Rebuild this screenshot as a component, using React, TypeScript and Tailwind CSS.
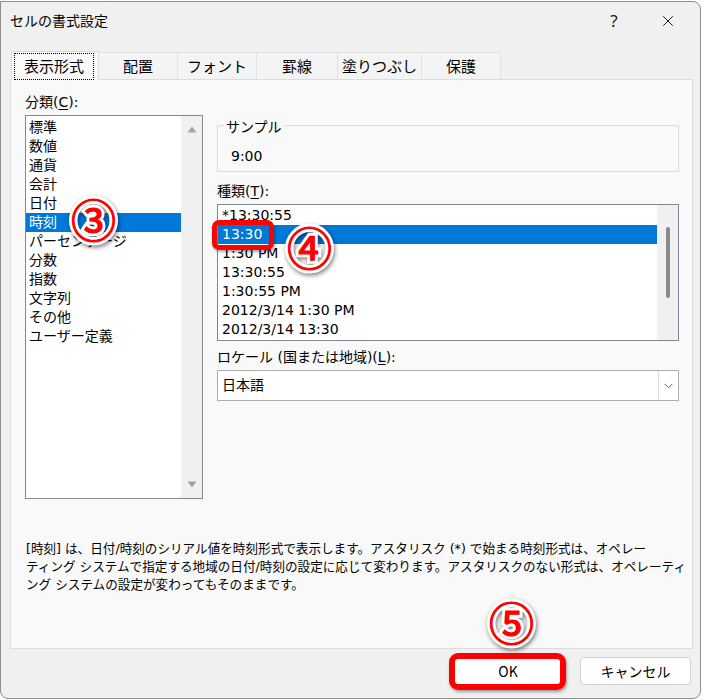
import { X } from "lucide-react";

const categories = [
  "標準",
  "数値",
  "通貨",
  "会計",
  "日付",
  "時刻",
  "パーセンテージ",
  "分数",
  "指数",
  "文字列",
  "その他",
  "ユーザー定義",
];

const types = [
  "*13:30:55",
  "13:30",
  "1:30 PM",
  "13:30:55",
  "1:30:55 PM",
  "2012/3/14 1:30 PM",
  "2012/3/14 13:30",
];

const tabs = [
  { label: "配置", w: "w-[80px]" },
  { label: "フォント", w: "w-[80px]" },
  { label: "罫線", w: "w-[82px]" },
  { label: "塗りつぶし", w: "w-[85px]" },
  { label: "保護", w: "w-[80px]" },
];

// red circled step number with white outline and soft shadow
const Step = ({ n, className }: { n: string; className: string }) => (
  <span
    className={`absolute pointer-events-none font-['Noto_Sans_CJK_JP',sans-serif] text-[45px] leading-none ${className}`}
  >
    <span className="relative text-[#ff0000] [-webkit-text-stroke:7px_#ffffff] [paint-order:stroke_fill] drop-shadow-[1px_2px_2px_rgba(0,0,0,0.5)]">
      {n}
    </span>
    <span className="absolute left-0 top-0 text-[#ff0000] [-webkit-text-stroke:1.2px_#ff0000]">{n}</span>
  </span>
);

const App = () => {
  return (
    <div className="relative w-[703px] h-[700px] bg-white overflow-hidden pt-[1px] font-['DejaVu_Sans','Noto_Sans_CJK_JP',sans-serif] text-black">
      <div className="w-[701px] h-[698px] flex flex-col bg-[#f0f0f0] border border-[#8e8e8e] rounded-tr-[8px] rounded-b-[8px]">
        {/* title bar */}
        <div className="h-[37px] flex items-center pl-[9px] pr-[9px] shrink-0">
          <span className="text-[14px] font-['Noto_Sans_CJK_JP',sans-serif]">セルの書式設定</span>
          <div className="ml-auto flex items-center">
            <span className="w-[46px] text-center text-[17px] font-['Noto_Sans',sans-serif] text-[#1a1a1a]">?</span>
            <span className="w-[46px] ml-[8px] flex justify-center">
              <X className="w-[18px] h-[18px] text-[#1a1a1a]" strokeWidth={1.3} />
            </span>
          </div>
        </div>

        {/* tabs */}
        <div className="mt-[11px] ml-[10px] flex items-end h-[29px] relative z-10">
          <div className="w-[88px] h-[29px] bg-[#f9f9f9] border border-b-0 border-[#d9d9d9] pt-[1px] pl-[2px] pr-[4px] -mb-px">
            <div className="h-[27px] border border-dotted border-black flex items-center justify-center text-[15px] font-['Noto_Sans_CJK_JP',sans-serif]">
              表示形式
            </div>
          </div>
          {tabs.map((t) => (
            <div
              key={t.label}
              className={`${t.w} h-[27px] -ml-px bg-[#f4f4f4] border border-b-0 border-[#e1e1e1] flex items-center justify-center text-[15px] font-['Noto_Sans_CJK_JP',sans-serif]`}
            >
              {t.label}
            </div>
          ))}
        </div>

        {/* tab page */}
        <div className="ml-[9px] w-[683px] h-[570px] shrink-0 bg-[#f9f9f9] border border-[#dcdcdc] pt-[13px] pl-[14px] pr-[13px] text-[14px]">
          <div className="flex gap-[14px]">
            {/* category list */}
            <div className="w-[178px]">
              <div className="h-[22px] leading-[18px]">
                分類(<span className="underline underline-offset-2">C</span>):
              </div>
              <div className="h-[384px] flex bg-white border border-[#828790]">
                <div className="flex-1 pt-[2px]">
                  {categories.map((c) => (
                    <div
                      key={c}
                      className={`h-[19px] leading-[19px] pl-[3px] whitespace-nowrap ${
                        c === "時刻" ? "bg-[#0078d7] text-white" : ""
                      }`}
                    >
                      {c}
                    </div>
                  ))}
                </div>
                <div className="w-[21px] bg-[#f0f0f0] flex flex-col items-center justify-between py-[10px]">
                  <svg width="10" height="7" viewBox="0 0 10 7">
                    <polygon points="5,0.5 9.5,6.5 0.5,6.5" fill="#a3a3a3" />
                  </svg>
                  <svg width="10" height="7" viewBox="0 0 10 7">
                    <polygon points="0.5,0.5 9.5,0.5 5,6.5" fill="#a3a3a3" />
                  </svg>
                </div>
              </div>
            </div>

            {/* right side */}
            <div className="flex-1 flex flex-col">
              <div className="relative mt-[32px] h-[47px] border border-[#dcdcdc]">
                <span className="absolute left-[6px] -top-[9px] px-[2px] bg-[#f9f9f9] leading-[18px] font-['Noto_Sans_CJK_JP',sans-serif]">
                  サンプル
                </span>
                <div className="pl-[13px] pt-[21px] leading-[18px]">9:00</div>
              </div>

              <div className="mt-[10px] leading-[19px]">
                種類(<span className="underline underline-offset-2">T</span>):
              </div>
              <div className="mt-[3px] h-[137px] flex bg-white border border-[#828790]">
                <div className="flex-1 pt-[1px]">
                  {types.map((t, i) => (
                    <div
                      key={i}
                      className={`h-[19px] leading-[19px] pl-[4px] whitespace-nowrap ${
                        i === 1 ? "bg-[#0078d7] text-white" : ""
                      }`}
                    >
                      {t}
                    </div>
                  ))}
                </div>
                <div className="w-[21px] bg-[#f0f0f0] pt-[22px] flex justify-center">
                  <div className="w-[4px] h-[71px] rounded-full bg-[#8a8a8a]" />
                </div>
              </div>

              <div className="mt-[6px] leading-[20px]">
                ロケール (国または地域)(<span className="underline underline-offset-2">L</span>):
              </div>
              <div className="mt-[3px] h-[31px] flex bg-white border border-[#adadad]">
                <div className="flex-1 pl-[4px] flex items-center">日本語</div>
                <div className="w-[20px] border-l border-[#dadada] flex items-center justify-center">
                  <svg width="9" height="6" viewBox="0 0 9 6">
                    <polyline points="0.5,0.8 4.5,4.8 8.5,0.8" fill="none" stroke="#606060" strokeWidth="1" />
                  </svg>
                </div>
              </div>
            </div>
          </div>

          <p className="mt-[41px] pl-[1px] text-[12.6px] leading-[18px] whitespace-nowrap">
            [時刻] は、日付/時刻のシリアル値を時刻形式で表示します。アスタリスク (*) で始まる時刻形式は、オペレー
            <br />
            ティング システムで指定する地域の日付/時刻の設定に応じて変わります。アスタリスクのない形式は、オペレーティ
            <br />
            ング システムの設定が変わってもそのままです。
          </p>
        </div>

        {/* buttons */}
        <div className="mt-[8px] flex justify-end gap-[17px] pr-[9px] text-[14px] font-['Noto_Sans_CJK_JP',sans-serif]">
          <button className="w-[110px] h-[28px] bg-white border border-[#d0d0d0] rounded-[4px]">OK</button>
          <button className="w-[111px] h-[28px] bg-white border border-[#d0d0d0] rounded-[4px]">キャンセル</button>
        </div>
      </div>

      {/* annotations */}
      <div className="absolute left-[212px] top-[220px] w-[62px] h-[30px] border-[5px] border-[#ff0000] rounded-[7px] shadow-[1px_2px_3px_rgba(0,0,0,0.35)]" />
      <div className="absolute left-[449px] top-[653px] w-[117px] h-[37px] border-[6px] border-[#ff0000] rounded-[9px] shadow-[1px_2px_3px_rgba(0,0,0,0.35)]" />
      <Step n="③" className="left-[71px] top-[196px]" />
      <Step n="④" className="left-[287px] top-[224px]" />
      <Step n="⑤" className="left-[489px] top-[599px]" />
    </div>
  );
};

export default App;
